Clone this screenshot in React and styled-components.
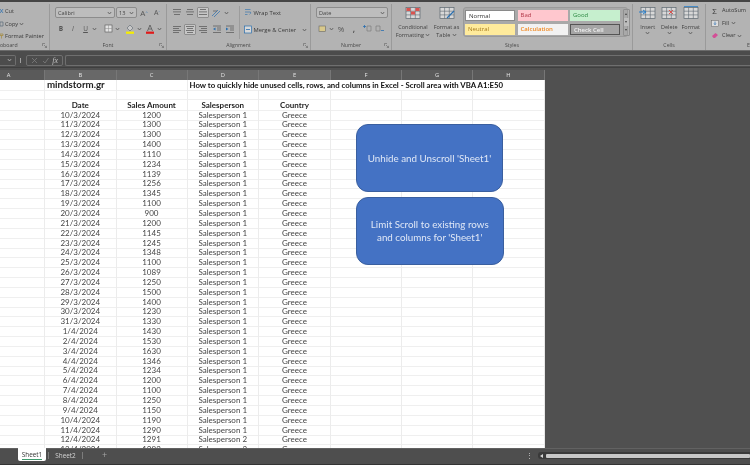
import React from "react";
import styled, { createGlobalStyle } from "styled-components";

const Global = createGlobalStyle`
  html, body { margin: 0; padding: 0; width: 750px; height: 465px; overflow: hidden; background: #4f4f4f; }
  #root { width: 750px; height: 465px; }
  * { box-sizing: border-box; }
`;

const UI = `"Open Sans", "Noto Sans", sans-serif`;
const CELL = `Lato, "Liberation Sans", sans-serif`;

const Window = styled.div`
  width: 750px; height: 465px; display: flex; flex-direction: column; overflow: hidden;
  background: #4f4f4f; filter: blur(0.35px);
`;

/* ribbon */
const Ribbon = styled.div`
  height: 51px; flex: none; display: flex; background: #b3b3b3; padding-top: 2px;
  border-top: 2px solid #454545; border-bottom: 1px solid #6b6b6b; overflow: hidden;
  font-family: ${UI}; font-size: 5.6px; color: #3a3a3a;
`;
const Group = styled.div`
  position: relative; flex: none; width: ${p => p.$w}px;
  display: flex; flex-direction: column; height: 47px;
  border-right: ${p => p.$noline ? "none" : "1px solid #9a9a9a"};
`;
const Body = styled.div`
  flex: 1; min-height: 0; display: flex; padding: ${p => p.$pad || "3px 4px 0"};
`;
const GroupLabel = styled.div`
  height: 11px; text-align: ${p => p.$align || "center"}; font-size: 5.2px; line-height: 10px; color: #4a4a4a;
`;
const Launcher = styled.svg`
  position: absolute; right: 2px; bottom: 3px; width: 5px; height: 5px;
`;
const ClipList = styled.div`
  display: flex; flex-direction: column; gap: 6.5px; padding-top: 1px; font-size: 5.6px; line-height: 6px; white-space: nowrap;
`;
const ClipItem = styled.div`
  height: 6px; display: flex; align-items: center; gap: 1px;
`;
const Stack = styled.div`
  display: flex; flex-direction: column; gap: ${p => p.$gap ?? 5}px; padding-top: ${p => p.$top || 0}px;
`;
const Row = styled.div`
  display: flex; align-items: center; height: 11px; gap: ${p => p.$gap ?? 0}px; white-space: nowrap; font-size: ${p => p.$size || 5.6}px;
`;
const Select = styled.div`
  width: ${p => p.$w}px; height: 11px; flex: none; background: #bdbdbd; border: 1px solid #8c8c8c; border-radius: 2px;
  display: flex; align-items: center; justify-content: space-between; padding: 0 2px;
  font-size: 5.6px; color: #444;
`;
const Glyph = styled.span`
  width: ${p => p.$w || 12}px; height: 11px; flex: none; display: inline-flex; align-items: center; justify-content: center;
  margin-left: ${p => p.$ml || 0}px;
  font-size: ${p => p.$size || 6}px; font-weight: ${p => p.$bold ? 700 : 400};
  font-style: ${p => p.$italic ? "italic" : "normal"}; text-decoration: ${p => p.$under ? "underline" : "none"};
  color: #555; border-radius: 1px;
  background: ${p => p.$on ? "#c6c6c6" : "transparent"};
  outline: ${p => p.$on ? "1px solid #8e8e8e" : "none"}; outline-offset: -1px;
`;
const Sup = styled.sup`
  font-size: 4px; color: #2a6fb0;
`;
const Divider = styled.div`
  width: 1px; height: 33px; background: #9c9c9c; margin: 0 4px 0 3px;
`;
const Big = styled.div`
  width: ${p => p.$w || 34}px; flex: none; display: flex; flex-direction: column; align-items: center;
  text-align: center; line-height: 8px; font-size: 5.5px; color: #444; white-space: nowrap; padding-top: 1px;
`;
const BigIcon = styled.div`
  height: 15px; display: flex; align-items: center; margin-bottom: 2.5px;
`;
const GalleryWrap = styled.div`
  padding-top: 3px;
`;
const Gallery = styled.div`
  width: 165px; height: 30px; flex: none; background: #a9a9a9; border: 1px solid #9a9a9a; border-radius: 3px;
  display: grid; grid-template-columns: repeat(3, 50px) 7px; column-gap: 2.5px; row-gap: 3px; padding: 2px 0 2px 1px;
  grid-template-rows: 11px 11px;
`;
const Style = styled.div`
  background: ${p => p.$bg}; color: ${p => p.$fg}; font-size: 6px; line-height: 10px; padding-left: 3px; border: ${p => p.$border || "none"};
  font-weight: ${p => p.$bold ? 600 : 400};
`;
const GalleryScroll = styled.div`
  grid-row: 1 / span 2; grid-column: 4; display: flex; flex-direction: column; margin-top: -1px;
  width: 7px; height: 27px; border: 1px solid #8f8f8f; border-radius: 1px;
  color: #444; font-size: 4px; line-height: 8px; text-align: center;
`;
const ScrollMid = styled.span`
  background: #bdbdbd;
`;
const EditList = styled.div`
  display: flex; flex-direction: column; gap: 5.5px; padding: 3px 0 0 3px; white-space: nowrap; font-size: 5.6px; line-height: 7px;
`;
const EditItem = styled.div`
  display: flex; align-items: center; gap: 2px;
`;
const EditIcon = styled.span`
  width: 11px; height: 7px; flex: none; display: flex; align-items: center; justify-content: center; font-size: 8px; line-height: 7px;
`;

/* formula bar */
const FormulaBar = styled.div`
  height: 17px; flex: none; display: flex; align-items: center; background: #4c4c4c; padding: 2px 0 0; gap: 2px;
  border-bottom: 1px solid #3f3f3f;
`;
const NameBox = styled.div`
  width: 16px; height: 11px; flex: none; border: 1px solid #6f6f6f; border-left: none; border-radius: 0 2px 2px 0;
  display: flex; align-items: center; justify-content: flex-end; padding-right: 3px;
`;
const Dots = styled.div`
  width: 1px; height: 5px; background: #a0a0a0; margin: 0 3px 0 2px;
`;
const FxBox = styled.div`
  width: 37px; height: 11px; flex: none; border: 1px solid #6f6f6f; border-radius: 2px; display: flex; align-items: center; justify-content: space-around; padding: 0 2px;
  color: #c0c0c0; font-family: "Liberation Serif", serif; font-style: italic; font-size: 8px;
`;
const Input = styled.div`
  flex: 1; height: 11px; border: 1px solid #6f6f6f; border-right: none; border-radius: 2px 0 0 2px; background: #4a4a4a;
`;

/* sheet */
const Middle = styled.div`
  height: 380px; flex: none; display: flex; background: #505050;
`;
const SheetArea = styled.div`
  width: 545px; flex: none; display: flex; flex-direction: column;
`;
const Columns = styled.div`
  display: grid; grid-template-columns: 45px 71.5px 71px 71.5px 72px 71px 71px 72px; height: 12px; padding-top: 2px; flex: none;
  background: #505050;
`;
const ColHead = styled.div`
  font-family: ${UI}; font-size: 5.8px; line-height: 10px; text-align: center; color: #e2e2e2;
  background: ${p => p.$sel ? "#686868" : "#5a5a5a"};
  border-right: 1px solid #777;
  border-bottom: 1px solid ${p => p.$sel ? "#4f9a72" : "#5a5a5a"};
  padding-right: ${p => p.$clip ? 27 : 0}px;
`;
const Sheet = styled.div`
  position: relative; flex: 1; min-height: 0; overflow: hidden; background: #fff; border-right: 1px solid #e8e8e8;
  font-family: ${CELL}; font-size: 8px; color: #333;
`;
const SheetRow = styled.div`
  display: grid; grid-template-columns: 45px 71.5px 71px 71.5px 72px 71px 71px 72px; height: 9.85px;
`;
const Cell = styled.div`
  border-right: ${p => p.$open ? "none" : "1px solid #ececec"}; border-bottom: 1px solid #efefef;
  line-height: 10px; text-align: center; white-space: nowrap; min-width: 0;
  font-weight: ${p => p.$bold ? 700 : 400}; color: ${p => p.$bold ? "#1f1f1f" : "#444"};
`;
const Brand = styled(Cell)`
  text-align: left; font-size: 9.7px; line-height: 9px; padding-left: 2px; color: #222; font-weight: 700; overflow: visible;
`;
const Title = styled(Cell)`
  text-align: left; padding-left: 2px; line-height: 10px; font-size: 7.8px; font-weight: 700; color: #111; overflow: visible; border-right: none;
`;
const Shape = styled.div`
  position: absolute; left: ${p => p.$x}px; top: ${p => p.$y}px; width: 147.5px; height: 68px; border-radius: 12px;
  background: #4472c4; border: 1px solid #3a5f9f; color: #dfe7f6; display: flex; align-items: center; justify-content: center;
  text-align: center; font-size: 9.8px; line-height: 13px; white-space: nowrap; font-family: ${CELL};
`;

/* tab bar */
const TabBar = styled.div`
  height: 13px; flex: none; background: #4e4e4e; display: flex; align-items: flex-start; border-top: 1px solid #626262;
  font-family: ${UI}; font-size: 6.4px;
`;
const Tab = styled.div`
  margin-left: 18px; width: 28px; height: 13px; margin-top: -1px; background: #fff; border-radius: 0 0 2px 2px; text-align: center; color: #333; line-height: 9px; padding-top: 2px; position: relative;
  &::after { content: ""; position: absolute; left: 4px; right: 4px; bottom: 1px; height: 1px; background: #3d9a6c; }
`;
const TabSep = styled.div`
  width: 1px; height: 7px; margin-top: 3px; background: #7c7c7c; margin-left: ${p => p.$ml || 0}px;
`;
const TabOff = styled.div`
  width: 33px; text-align: center; color: #d5d5d5; line-height: 10px; padding-top: 2px;
`;
const Plus = styled.div`
  margin-left: 19px; color: #a5a5a5; font-size: 9px; line-height: 12px;
`;
const VDots = styled.div`
  margin-left: 422px; margin-top: 4px; width: 1.2px; height: 6px; background: repeating-linear-gradient(#b0b0b0 0 1px, transparent 1px 2.4px);
`;
const Scroll = styled.div`
  margin-left: 8px; margin-top: 3px; height: 7px; flex: 1; display: flex; align-items: center; background: #3a3a3a; border-radius: 3px 0 0 3px; padding-left: 2px; gap: 3px;
`;
const Thumb = styled.div`
  flex: 1; height: 4px; background: #c8c8c8; border-radius: 1px;
`;
const Arrow = styled.div`
  width: 0; height: 0; border-top: 2.5px solid transparent; border-bottom: 2.5px solid transparent; border-right: 3px solid #d6d6d6;
`;
const Foot = styled.div`
  flex: 1; background: #4e4e4e; border-bottom: 1px solid #333;
`;

const Dd = ({ c = "#555" }) => (
  <svg width="5" height="4" viewBox="0 0 5 4" style={{ flex: "none" }}><path d="M.8 1 2.5 3 4.2 1" fill="none" stroke={c} strokeWidth=".8" /></svg>
);
const LauncherIcon = () => (
  <Launcher viewBox="0 0 5 5"><path d="M.5 3V.5H3M2 2l2.5 2.5M4.5 2.8v1.7H2.8" fill="none" stroke="#666" strokeWidth=".6" /></Launcher>
);
const Lines = ({ kind }) => {
  const m = {
    left: [[1, 8], [1, 6], [1, 8], [1, 6]], center: [[1, 8], [2, 6], [1, 8], [2, 6]], right: [[1, 8], [3, 6], [1, 8], [3, 6]],
    top: [[1, 8], [1, 8], [2, 6]], mid: [[2, 6], [1, 8], [2, 6]], bot: [[2, 6], [1, 8], [1, 8]],
  }[kind];
  return (
    <svg width="10" height="9" viewBox="0 0 10 9">
      {m.map(([x, w], i) => <rect key={i} x={x} y={1 + i * (m.length === 3 ? 2.5 : 2)} width={w} height=".8" fill="#606060" />)}
    </svg>
  );
};
const IndentIcon = ({ flip }) => (
  <svg width="10" height="9" viewBox="0 0 10 9">
    <path d="M1 1h8M5 3h4M5 5h4M1 7.5h8" stroke="#606060" strokeWidth=".8" />
    <path d={flip ? "M1 2.5 3.5 4 1 5.5z" : "M3.5 2.5 1 4l2.5 1.5z"} fill="#2a6fb0" />
  </svg>
);
const TableIcon = ({ accent, deco }) => (
  <svg width="18" height="14" viewBox="0 0 18 14">
    <rect x="2" y="1.5" width="14" height="11" fill="#d8d8d8" stroke="#5c6770" strokeWidth=".7" />
    <path d="M2 5.2h14M2 8.9h14M6.6 1.5v11M11.3 1.5v11" stroke="#5c6770" strokeWidth=".6" />
    {deco}
    {accent}
  </svg>
);
const ClipIcon = ({ d, c = "#5a6a7a" }) => (
  <svg width="4" height="6" viewBox="0 0 4 6" style={{ flex: "none" }}><path d={d} fill="none" stroke={c} strokeWidth=".7" /></svg>
);

const rows = `10/3/2024 1200,11/3/2024 1300,12/3/2024 1300,13/3/2024 1400,14/3/2024 1110,15/3/2024 1234,16/3/2024 1139,17/3/2024 1256,18/3/2024 1345,19/3/2024 1100,20/3/2024 900,21/3/2024 1200,22/3/2024 1145,23/3/2024 1245,24/3/2024 1348,25/3/2024 1100,26/3/2024 1089,27/3/2024 1250,28/3/2024 1500,29/3/2024 1400,30/3/2024 1230,31/3/2024 1330,1/4/2024 1430,2/4/2024 1530,3/4/2024 1630,4/4/2024 1346,5/4/2024 1234,6/4/2024 1200,7/4/2024 1100,8/4/2024 1250,9/4/2024 1150,10/4/2024 1190,11/4/2024 1290,12/4/2024 1291,13/4/2024 1292`
  .split(",").map(s => s.split(" "));

const COLS = ["A", "B", "C", "D", "E", "F", "G", "H"];
const Blank = () => <><Cell /><Cell /><Cell /></>;

export default function App() {
  return (
    <Window>
      <Global />
      <Ribbon>
        <Group $w={50}>
          <Body $pad="3px 0 0 0">
            <ClipList>
              <ClipItem><ClipIcon c="#2a6fb0" d="M0 5 3 1M3 5 0 1" />Cut</ClipItem>
              <ClipItem><ClipIcon d="M0 1h3v4H0z" />Copy <Dd /></ClipItem>
              <ClipItem><ClipIcon c="#a58a3a" d="M0 1h3v1.5H0zM1.5 2.5V5.5" />Format Painter</ClipItem>
            </ClipList>
          </Body>
          <GroupLabel $align="left">oboard</GroupLabel>
          <LauncherIcon />
        </Group>
        <Group $w={117}>
          <Body $pad="3px 0 0 5px">
            <Stack>
              <Row $gap={1}>
                <Select $w={60}>Calibri <Dd /></Select>
                <Select $w={21}>13 <Dd /></Select>
                <Glyph $size={8}>A<Sup>^</Sup></Glyph>
                <Glyph $size={7}>A<Sup>ˇ</Sup></Glyph>
              </Row>
              <Row>
                <Glyph $bold $size={6.5}>B</Glyph>
                <Glyph $italic $size={6.5}>I</Glyph>
                <Glyph $w={13} $under $size={6.5}>U</Glyph>
                <Dd />
                <Glyph $w={10} $ml={6}>
                  <svg width="9" height="9" viewBox="0 0 9 9"><rect x="1" y="1" width="7" height="7" fill="#e3e3e3" stroke="#555" strokeWidth=".6" /><path d="M4.5 1v7M1 4.5h7" stroke="#8a8a8a" strokeWidth=".5" /></svg>
                </Glyph>
                <Glyph $w={5} $ml={2}><Dd /></Glyph>
                <Glyph $w={10} $ml={5}>
                  <svg width="10" height="10" viewBox="0 0 10 10"><path d="M5 1 8 4 5 7 2 4z" fill="#c8c8c8" stroke="#5c6770" strokeWidth=".6" /><rect x="1" y="7.6" width="8" height="2.2" fill="#f6ee00" /></svg>
                </Glyph>
                <Glyph $w={5} $ml={2}><Dd /></Glyph>
                <Glyph $w={10} $ml={3}>
                  <svg width="10" height="10" viewBox="0 0 10 10"><path d="M2.5 7 5 1l2.5 6M3.5 5h3" fill="none" stroke="#555" strokeWidth=".8" /><rect x="1" y="7.6" width="8" height="2.2" fill="#e01a1a" /></svg>
                </Glyph>
                <Glyph $w={5} $ml={2}><Dd /></Glyph>
              </Row>
            </Stack>
          </Body>
          <GroupLabel>Font</GroupLabel>
          <LauncherIcon />
        </Group>
        <Group $w={144}>
          <Body $pad="2px 0 0 4px">
            <Stack $gap={6} $top={1}>
              <Row $gap={1}>
                <Glyph><Lines kind="top" /></Glyph>
                <Glyph><Lines kind="mid" /></Glyph>
                <Glyph $on><Lines kind="bot" /></Glyph>
                <Glyph $w={13}>
                  <svg width="11" height="10" viewBox="0 0 11 10"><path d="M1 8 7 2M3 9l6-6" stroke="#2a6fb0" strokeWidth=".7" /><path d="M2 3h4" stroke="#606060" strokeWidth=".8" /></svg>
                </Glyph>
                <Dd />
              </Row>
              <Row $gap={1}>
                <Glyph><Lines kind="left" /></Glyph>
                <Glyph $on><Lines kind="center" /></Glyph>
                <Glyph><Lines kind="right" /></Glyph>
                <Glyph $w={13}><IndentIcon /></Glyph>
                <Glyph><IndentIcon flip /></Glyph>
              </Row>
            </Stack>
            <Divider />
            <Stack $gap={6} $top={1}>
              <Row $gap={1.5} $size={5.8}>
                <svg width="8" height="9" viewBox="0 0 8 9"><path d="M1 1.5h5.5M1 4h5.5q1 1.2-1 2.4M1 6.5h2.5" fill="none" stroke="#4a7fae" strokeWidth=".8" /></svg>
                Wrap Text
              </Row>
              <Row $gap={1.5} $size={5.8}>
                <svg width="8" height="9" viewBox="0 0 8 9"><rect x=".5" y="1" width="7" height="7" fill="#d8d8d8" stroke="#2a6fb0" strokeWidth=".7" /><path d="M2 4.5h4" stroke="#2a6fb0" strokeWidth=".8" /></svg>
                Merge &amp; Center
                <Glyph $w={5} $ml={4}><Dd /></Glyph>
              </Row>
            </Stack>
          </Body>
          <GroupLabel>Alignment</GroupLabel>
          <LauncherIcon />
        </Group>
        <Group $w={81}>
          <Body $pad="3px 0 0 5px">
            <Stack>
              <Select $w={72}>Date <Dd /></Select>
              <Row $gap={1}>
                <Glyph><svg width="9" height="8" viewBox="0 0 9 8"><rect x="1" y="1" width="6.5" height="5.5" fill="#d9c98c" stroke="#666" strokeWidth=".6" /></svg></Glyph>
                <Dd />
                <Glyph $size={8}>%</Glyph>
                <Glyph $bold $size={8}>,</Glyph>
                <Glyph><svg width="10" height="9" viewBox="0 0 10 9"><path d="M1 2.5h3M2.5 1v3" stroke="#2a6fb0" strokeWidth=".8" /><path d="M5 2h4v5H5z" fill="none" stroke="#777" strokeWidth=".6" /></svg></Glyph>
                <Glyph><svg width="10" height="9" viewBox="0 0 10 9"><path d="M6 6.5h3" stroke="#2a6fb0" strokeWidth=".8" /><path d="M1 2h4v5H1z" fill="none" stroke="#777" strokeWidth=".6" /></svg></Glyph>
              </Row>
            </Stack>
          </Body>
          <GroupLabel>Number</GroupLabel>
          <LauncherIcon />
        </Group>
        <Group $w={241}>
          <Body $pad="0 0 0 4px">
            <Big $w={34}>
              <BigIcon>
                <TableIcon deco={<><rect x="2.5" y="2" width="4" height="3" fill="#d9534f" /><rect x="11.5" y="2" width="4" height="3" fill="#d9534f" /><rect x="7" y="5.5" width="4" height="3" fill="#d9534f" /></>} />
              </BigIcon>
              Conditional
              <span>Formatting <Dd /></span>
            </Big>
            <Big $w={33}>
              <BigIcon>
                <TableIcon accent={<path d="M9 12 16 5" stroke="#2a6fb0" strokeWidth="1.3" />} />
              </BigIcon>
              Format as
              <span>Table <Dd /></span>
            </Big>
            <GalleryWrap>
              <Gallery>
                <Style $bg="#fff" $fg="#333" $border="1px solid #8a8a8a">Normal</Style>
                <Style $bg="#ffc7ce" $fg="#b33a4a">Bad</Style>
                <Style $bg="#c6efce" $fg="#2f8a45">Good</Style>
                <GalleryScroll><span>▴</span><ScrollMid>▾</ScrollMid><span>▾</span></GalleryScroll>
                <Style $bg="#ffeb9c" $fg="#a67c1f">Neutral</Style>
                <Style $bg="#f2f2f2" $fg="#f08a24" $bold>Calculation</Style>
                <Style $bg="#a5a5a5" $fg="#f2f2f2" $bold $border="1px solid #555">Check Cell</Style>
              </Gallery>
            </GalleryWrap>
          </Body>
          <GroupLabel>Styles</GroupLabel>
        </Group>
        <Group $w={73}>
          <Body $pad="0 0 0 4px">
            {[
              ["Insert", <path key="a" d="M0 6h7M4 4l3 2-3 2" stroke="#2a7fc9" strokeWidth="1" fill="none" />],
              ["Delete", <path key="b" d="M9 4l4 4M13 4l-4 4" stroke="#d9534f" strokeWidth="1" />],
              ["Format", <path key="c" d="M2 .5h14" stroke="#2a7fc9" strokeWidth=".8" />],
            ].map(([t, accent]) => (
              <Big key={t} $w={21.5}>
                <BigIcon><TableIcon accent={accent} /></BigIcon>
                {t}
                <Dd />
              </Big>
            ))}
          </Body>
          <GroupLabel>Cells</GroupLabel>
        </Group>
        <Group $w={44} $noline>
          <Body $pad="0">
            <EditList>
              <EditItem><EditIcon>Σ</EditIcon>AutoSum</EditItem>
              <EditItem><EditIcon><svg width="8" height="7" viewBox="0 0 8 7"><rect x=".5" y=".5" width="7" height="6" fill="#ddd" stroke="#666" strokeWidth=".5" /><path d="M4 1.5v3M3 3.5l1 1.2 1-1.2" stroke="#2a6fb0" strokeWidth=".7" fill="none" /></svg></EditIcon>Fill <Dd /></EditItem>
              <EditItem><EditIcon><svg width="8" height="7" viewBox="0 0 8 7"><path d="M1 4 4.5 1 7 3 4 6H2.5z" fill="#d34f96" /></svg></EditIcon>Clear <Dd /></EditItem>
            </EditList>
          </Body>
          <GroupLabel $align="right">E</GroupLabel>
        </Group>
      </Ribbon>

      <FormulaBar>
        <NameBox><Dd c="#b5b5b5" /></NameBox>
        <Dots />
        <FxBox>
          <svg width="7" height="7" viewBox="0 0 7 7"><path d="M1 1l5 5M6 1 1 6" stroke="#7d7d7d" strokeWidth=".8" /></svg>
          <svg width="7" height="7" viewBox="0 0 7 7"><path d="M1 4l2 2 3.5-5" stroke="#7d7d7d" strokeWidth=".8" fill="none" /></svg>
          <span>fx</span>
        </FxBox>
        <Input />
      </FormulaBar>

      <Middle>
        <SheetArea>
          <Columns>
            {COLS.map((c, i) => <ColHead key={c} $clip={i === 0} $sel={i >= 1 && i <= 4}>{c}</ColHead>)}
          </Columns>
          <Sheet>
            <SheetRow>
              <Cell />
              <Brand>mindstorm.gr</Brand>
              <Cell />
              <Title>How to quickly hide unused cells, rows, and columns in Excel - Scroll area with VBA A1:E50</Title>
              <Cell $open /><Cell $open /><Cell $open /><Cell />
            </SheetRow>
            <SheetRow>{COLS.map(c => <Cell key={c} />)}</SheetRow>
            <SheetRow>
              <Cell />
              <Cell $bold>Date</Cell><Cell $bold>Sales Amount</Cell><Cell $bold>Salesperson</Cell><Cell $bold>Country</Cell>
              <Blank />
            </SheetRow>
            {rows.map(([d, a], i) => (
              <SheetRow key={d}>
                <Cell />
                <Cell>{d}</Cell><Cell>{a}</Cell><Cell>Salesperson {i >= 33 ? 2 : 1}</Cell><Cell>Greece</Cell>
                <Blank />
              </SheetRow>
            ))}
            <Shape $x={355.7} $y={44}>Unhide and Unscroll 'Sheet1'</Shape>
            <Shape $x={356} $y={117}><span>Limit Scroll to existing rows<br />and columns for 'Sheet1'</span></Shape>
          </Sheet>
        </SheetArea>
      </Middle>

      <TabBar>
        <Tab>Sheet1</Tab>
        <TabSep $ml={2} />
        <TabOff>Sheet2</TabOff>
        <TabSep />
        <Plus>+</Plus>
        <VDots />
        <Scroll><Arrow /><Thumb /></Scroll>
      </TabBar>
      <Foot />
    </Window>
  );
}
